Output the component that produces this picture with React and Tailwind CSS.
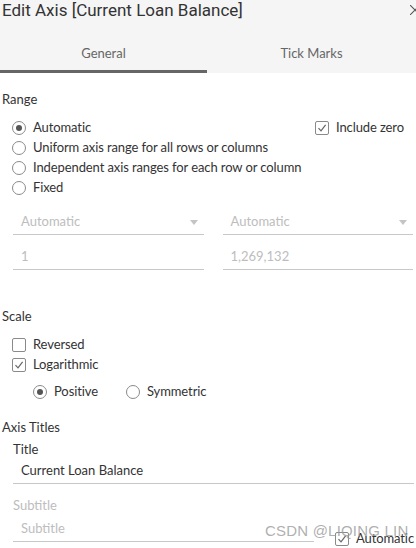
import React from "react";

const font = { fontFamily: "Lato, Roboto, 'Noto Sans', sans-serif" };

function Radio({ checked, label, className = "" }) {
  return (
    <div className={`flex items-center h-[20px] ${className}`}>
      <span className="w-[14px] h-[14px] rounded-full border border-[#8a8a8a] flex items-center justify-center bg-white shrink-0">
        {checked && <span className="w-[6px] h-[6px] rounded-full bg-[#555]" />}
      </span>
      <span className="ml-[7px] text-[13px] text-[#333] whitespace-nowrap tracking-[-0.1px]">{label}</span>
    </div>
  );
}

function Check({ checked, label, className = "" }) {
  return (
    <div className={`flex items-center h-[20px] ${className}`}>
      <span className="w-[14px] h-[14px] rounded-[2px] border border-[#8a8a8a] bg-white flex items-center justify-center shrink-0">
        {checked && (
          <svg width="10" height="10" viewBox="0 0 10 10">
            <path d="M1.5 5.2 L4 7.8 L8.6 1.8" fill="none" stroke="#666" strokeWidth="1.2" />
          </svg>
        )}
      </span>
      <span className="ml-[7px] text-[13px] text-[#333] whitespace-nowrap tracking-[-0.1px]">{label}</span>
    </div>
  );
}

function Field({ value, dropdown, dim, className = "" }) {
  return (
    <div className={`h-[25px] border-b border-[#c8c8c8] flex items-center justify-between pl-[8px] pr-[6px] ${className}`}>
      <span className={`text-[13px] ${dim ? "text-[#bdbdbd]" : "text-[#333]"}`}>{value}</span>
      {dropdown && (
        <svg width="8" height="5" viewBox="0 0 8 5">
          <path d="M0 0 H8 L4 5 Z" fill="#c4c4c4" />
        </svg>
      )}
    </div>
  );
}

export default function App() {
  return (
    <div className="w-[416px] h-[548px] bg-white overflow-hidden relative" style={font}>
      {/* Header */}
      <div className="bg-[#f5f5f5] h-[73px] flex flex-col">
        <div className="h-[22px] flex items-start justify-between pl-[2px]">
          <span className="text-[17px] leading-[22px] text-[#333] -mt-[1px]" style={{ fontFamily: "Roboto, sans-serif" }}>
            Edit Axis [Current Loan Balance]
          </span>
          <svg width="10" height="10" viewBox="0 0 10 10" className="mt-[5px] mr-[-4px]">
            <path d="M0 0 L10 10 M10 0 L0 10" stroke="#555" strokeWidth="1.1" />
          </svg>
        </div>
        <div className="flex flex-1">
          <div className="w-[207px] flex flex-col">
            <div className="flex-1 flex items-center justify-center text-[13px] text-[#666] pt-[15px]">General</div>
            <div className="h-[3px] bg-[#666]" />
          </div>
          <div className="flex-1 flex flex-col">
            <div className="flex-1 flex items-center justify-center text-[13px] text-[#666] pt-[15px]">Tick Marks</div>
            <div className="h-[3px]" />
          </div>
        </div>
      </div>

      {/* Range */}
      <div className="mt-[18px] pl-[2px] text-[13px] leading-[16px] text-[#333]">Range</div>
      <div className="mt-[11px] pl-[12px] pr-[12px]">
        <div className="flex justify-between">
          <Radio checked label="Automatic" />
          <Check checked label="Include zero" />
        </div>
        <Radio label="Uniform axis range for all rows or columns" />
        <Radio label="Independent axis ranges for each row or column" />
        <Radio label="Fixed" />
      </div>

      <div className="mt-[12px] pl-[13px] pr-[3px] grid grid-cols-2 gap-x-[19px]">
        <Field value="Automatic" dropdown dim />
        <Field value="Automatic" dropdown dim />
        <Field value="1" dim className="mt-[10px]" />
        <Field value="1,269,132" dim className="mt-[10px]" />
      </div>

      {/* Scale */}
      <div className="mt-[38px] pl-[2px] text-[13px] leading-[16px] text-[#333]">Scale</div>
      <div className="mt-[11px] pl-[12px]">
        <Check label="Reversed" />
        <Check checked label="Logarithmic" />
        <div className="flex mt-[7px] pl-[21px] gap-x-[28px]">
          <Radio checked label="Positive" />
          <Radio label="Symmetric" />
        </div>
      </div>

      {/* Axis Titles */}
      <div className="mt-[17px] pl-[2px] text-[13px] leading-[16px] text-[#333]">Axis Titles</div>
      <div className="pl-[13px] pr-[2px]">
        <div className="mt-[6px] text-[13px] leading-[16px] text-[#333]">Title</div>
        <Field value="Current Loan Balance" className="mt-[2px]" />
        <div className="mt-[13px] text-[13px] leading-[16px] text-[#bdbdbd]">Subtitle</div>
        <div className="mt-[4px] flex items-end">
          <Field value="Subtitle" dim className="w-[303px]" />
          <Check checked label="Automatic" className="ml-[21px] translate-y-[7px]" />
        </div>
      </div>

      {/* watermark */}
      <div className="absolute left-[265px] top-[520px] text-[15px] text-[#9a9a9a]/80 tracking-[0.2px]" style={{ fontFamily: "'Liberation Sans', Arial, sans-serif" }}>
        CSDN @LIQING LIN
      </div>
    </div>
  );
}
